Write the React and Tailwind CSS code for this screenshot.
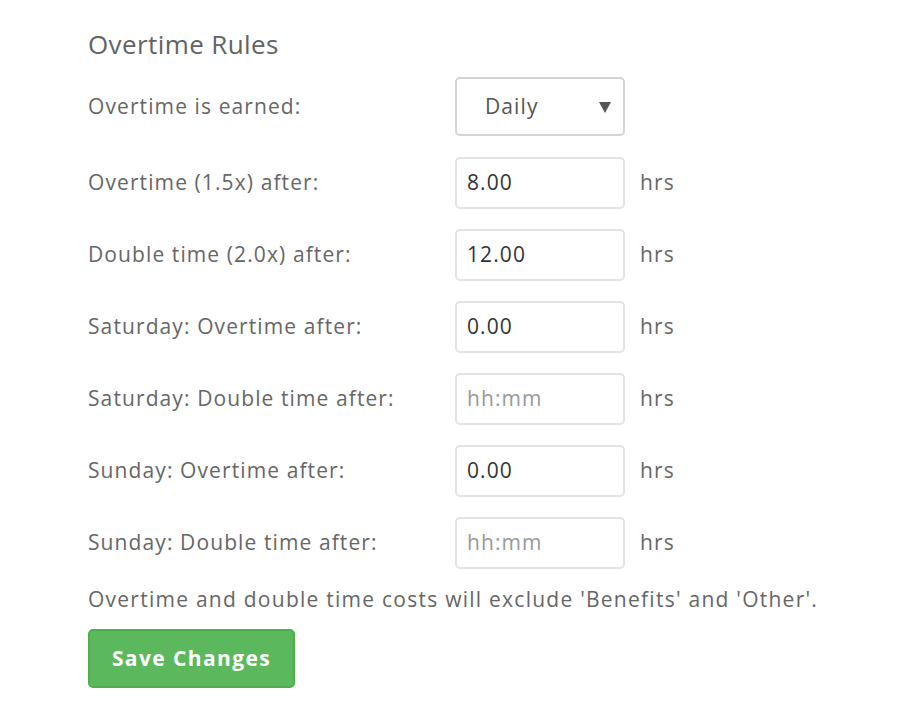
export default function App() {
  const rows = [
    { label: "Overtime (1.5x) after:", value: "8.00" },
    { label: "Double time (2.0x) after:", value: "12.00" },
    { label: "Saturday: Overtime after:", value: "0.00" },
    { label: "Saturday: Double time after:", value: "" },
    { label: "Sunday: Overtime after:", value: "0.00" },
    { label: "Sunday: Double time after:", value: "" },
  ];
  return (
    <div className="min-h-[714px] bg-white pl-[88px] pt-[26px] tracking-[1.1px]" style={{ fontFamily: '"Open Sans", sans-serif' }}>
      <h2 className="text-[26px] leading-[36px] text-[#636363] font-normal tracking-[0.4px]">Overtime Rules</h2>
      <div className="mt-[15px] flex items-center">
        <div className="w-[367px] text-[21px] text-[#666]">Overtime is earned:</div>
        <div className="relative w-[170px] h-[59px] rounded-[5px] border-2 border-[#d4d4d4] flex items-center pl-[28px] text-[21px] text-[#555]">
          Daily
          <svg className="absolute right-[12px] top-[23px]" width="12" height="11" viewBox="0 0 12 11">
            <path d="M0 0 L12 0 L6 11 Z" fill="#555" />
          </svg>
        </div>
      </div>
      <div className="mt-[21px] flex flex-col gap-[20px]">
        {rows.map((r) => (
          <div key={r.label} className="flex items-center">
            <div className="w-[367px] text-[21px] text-[#666]">{r.label}</div>
            <div className="w-[170px] h-[52px] rounded-[5px] border-2 border-[#e3e3e3] flex items-center pl-[10px] text-[21px]">
              {r.value ? <span className="text-[#333]">{r.value}</span> : <span className="text-[#999]">hh:mm</span>}
            </div>
            <div className="ml-[15px] text-[21px] text-[#666]">hrs</div>
          </div>
        ))}
      </div>
      <p className="mt-[16px] text-[21px] text-[#666] leading-[28px] tracking-[1.25px]">Overtime and double time costs will exclude 'Benefits' and 'Other'.</p>
      <button className="mt-[16px] w-[207px] h-[59px] rounded-[5px] bg-[#5cb85c] border-2 border-[#4cae4c] text-white text-[21px] font-bold tracking-[1.4px]">Save Changes</button>
    </div>
  );
}
